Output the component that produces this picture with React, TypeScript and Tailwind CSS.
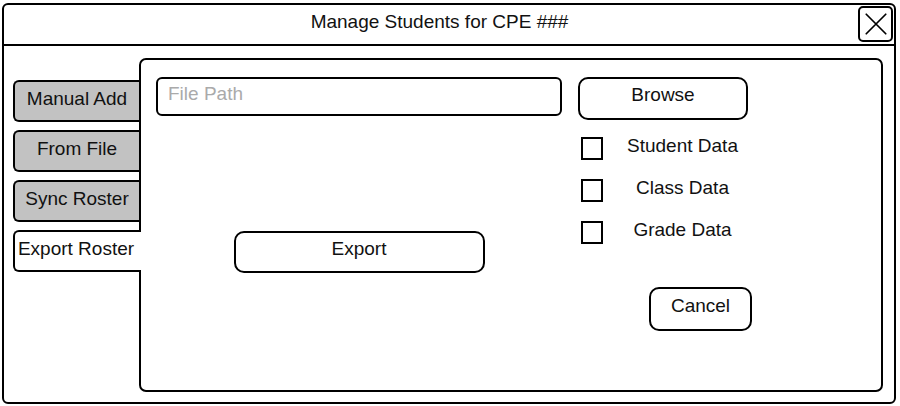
import { FC } from "react"

const tabs = ["Manual Add", "From File", "Sync Roster", "Export Roster"]
const active = "Export Roster"
const exportOptions = ["Student Data", "Class Data", "Grade Data"]

const CloseIcon: FC = () => (
  <svg viewBox="0 0 24 24" className="w-[26px] h-[26px]" fill="none" stroke="black" strokeWidth="1.6" strokeLinecap="round">
    <path d="M3 3L21 21M21 3L3 21" />
  </svg>
)

const App: FC = () => {
  return (
    <div className="pl-[2px] pt-[3px] bg-white font-['Liberation_Sans',Arial,sans-serif] text-[#111]">
      <div className="w-[894px] h-[401px] border-2 border-black rounded-[6px] flex flex-col bg-white">
        {/* title bar */}
        <div className="h-[41px] border-b-2 border-black flex items-start">
          <div className="flex-1 text-center pl-[17px] pt-[6px] text-[19px] leading-[22px]">
            Manage Students for CPE ###
          </div>
          <button className="mt-[1px] mr-[1px] w-[35px] h-[36px] border-2 border-black rounded-[5px] flex items-center justify-center">
            <CloseIcon />
          </button>
        </div>

        {/* body */}
        <div className="flex-1 flex pt-[12px] pb-[10px] pr-[11px]">
          <div className="ml-[9px] w-[126px] pt-[22px] flex flex-col gap-[8px]">
            {tabs.map((t) =>
              t === active ? (
                <div
                  key={t}
                  className="relative z-10 w-[128px] h-[42px] border-2 border-r-0 border-black rounded-l-[6px] bg-white flex items-center justify-center pr-[4px] pb-[3px] text-[19px]"
                >
                  {t}
                </div>
              ) : (
                <div
                  key={t}
                  className="w-[126px] h-[42px] border-2 border-r-0 border-black rounded-l-[6px] bg-[#c2c2c2] flex items-center justify-center pb-[4px] text-[19px]"
                >
                  {t}
                </div>
              )
            )}
          </div>

          <div className="flex-1 border-2 border-black rounded-[7px] bg-white flex pt-[17px] pl-[15px]">
            <div className="w-[406px] flex flex-col">
              <input
                placeholder="File Path"
                className="h-[39px] border-2 border-black rounded-[6px] px-[10px] pb-[6px] text-[19px] placeholder:text-[#aaa] outline-none"
              />
              <button className="mt-[115px] mx-auto w-[251px] h-[42px] border-2 border-black rounded-[10px] text-[19px] pb-[6px]">
                Export
              </button>
            </div>

            <div className="ml-[16px] flex flex-col">
              <button className="w-[170px] h-[43px] border-2 border-black rounded-[10px] text-[19px] pb-[6px]">
                Browse
              </button>
              <div className="mt-[17px] flex flex-col gap-[19px]">
                {exportOptions.map((o) => (
                  <label key={o} className="flex items-start">
                    <span className="ml-[3px] w-[22px] h-[23px] border-2 border-black bg-white" />
                    <span className="ml-[7px] w-[145px] text-center text-[19px] leading-[20px] -mt-[1px]">{o}</span>
                  </label>
                ))}
              </div>
              <button className="mt-[43px] ml-[71px] w-[103px] h-[44px] border-2 border-black rounded-[10px] text-[19px] pb-[6px]">
                Cancel
              </button>
            </div>
          </div>
        </div>
      </div>
    </div>
  )
}

export default App
